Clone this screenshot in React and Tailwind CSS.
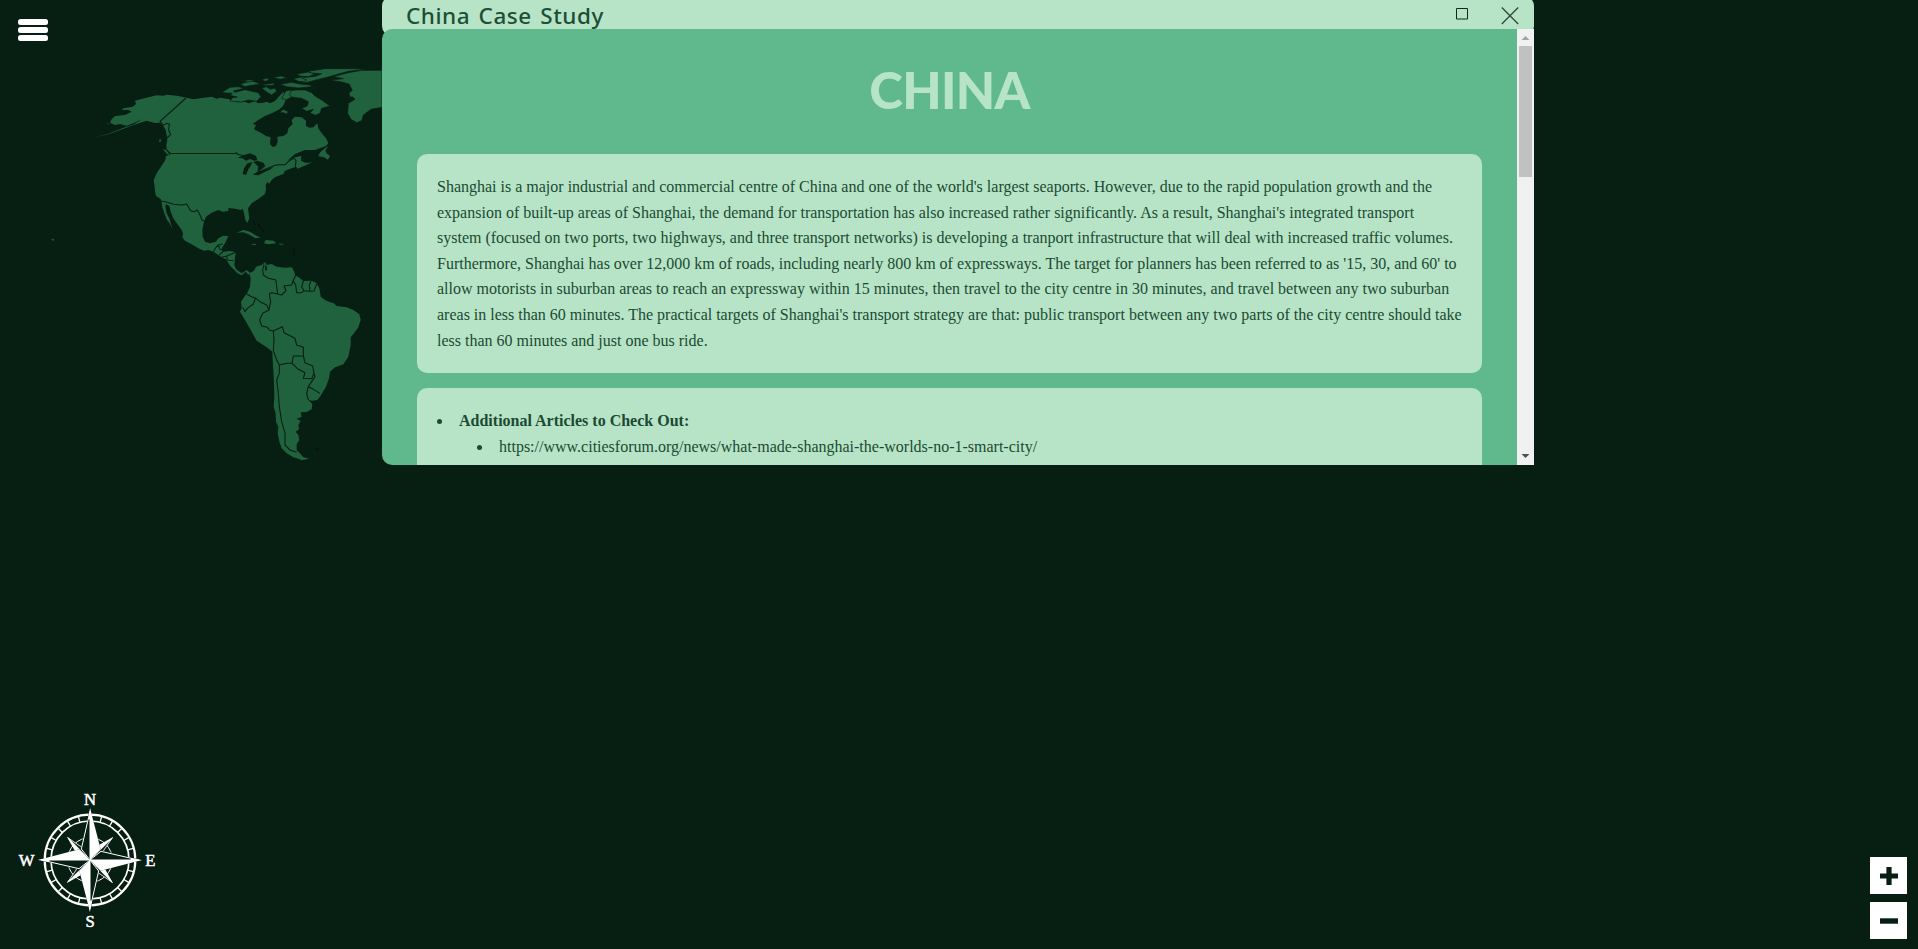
const DARK = "#071e13";
const LAND = "#21623e";

const northAmerica =
  "M280 413L325 403 375 385 425 367 440 362 465 369 480 368 490 378 497 390 500 405 502 420 499 435 500 448 508 455 514 462 505 466 498 468 496 480 485 497 470 520 461 540 464 560 465 575 468 588 482 597 485 605 487 622 493 640 500 658 510 672 517 688 513 672 508 655 500 640 496 620 498 612 508 618 512 635 520 655 532 672 545 690 549 700 547 712 555 722 575 733 595 745 612 752 625 750 640 755 655 765 665 772 678 778 690 797 703 810 712 820 725 826 737 815 745 825 750 818 740 810 725 820 708 808 703 795 705 772 708 757 690 753 670 755 665 745 675 730 685 708 670 707 655 715 648 725 630 730 615 725 608 710 607 690 612 665 618 650 635 638 655 630 668 635 685 633 685 624 705 626 722 630 728 626 732 640 736 660 742 669 748 655 746 640 744 625 755 610 775 597 795 582 798 568 797 555 803 545 807 552 815 540 825 532 850 522 855 512 875 505 888 500 893 506 912 498 937 487 915 488 903 482 903 472 912 462 930 457 950 450 975 440 985 430 978 415 965 400 955 385 952 370 940 382 928 383 918 378 918 362 905 352 885 350 875 360 878 372 865 385 862 400 850 408 832 410 833 425 828 438 818 441 810 432 812 412 798 408 785 400 762 388 768 375 758 372 775 360 795 348 815 340 835 330 850 318 857 300 862 290 850 276 838 288 825 303 810 310 800 305 790 308 775 310 765 304 745 310 735 305 715 307 700 302 685 297 660 293 650 296 635 290 600 295 580 298 560 293 530 287 500 284 490 287 470 286 445 292 425 297 405 302 408 312 398 320 370 325 365 330 385 330 395 335 375 345 345 348 335 358 330 368 345 375 360 372 380 377 400 370 428 357 400 374 375 382 325 401Z";

const arcticIslands = [
  "M665 278L690 262 715 260 732 265 700 273 705 277 735 269 775 278 783 290 770 304 745 300 725 306 690 303 698 293 712 291 690 286 697 280Z",
  "M785 264L800 260 810 268 825 264 830 274 815 285 800 276Z",
  "M860 275L885 270 915 270 935 278 945 288 965 300 990 318 965 325 960 340 947 346 930 339 940 328 920 334 905 325 922 318 925 305 905 295 880 292 863 288Z",
  "M858 272L875 270 868 284 875 291 858 300 845 295Z",
  "M720 252L755 242 782 252 755 256 735 260Z",
  "M725 243L750 239 765 242 745 246Z",
  "M785 239L800 234 808 240 795 244Z",
  "M785 254L825 249 820 256 795 257Z",
  "M840 253L875 247 900 252 930 255 935 260 895 264 860 260Z",
  "M820 232L845 228 860 234 840 238Z",
  "M890 222L925 216 945 222 925 230 900 228Z",
  "M880 236L910 230 935 235 915 246 895 244Z",
  "M925 214L975 206 1060 206 1100 208 1045 214 1015 222 985 231 950 239 930 245 905 250 920 240 905 234 950 228 965 221 935 219Z",
  "M837 338L850 328 865 335 860 342 850 338Z",
  "M990 240L1030 236 1000 230 1045 218 1085 211 1146 211 1146 322 1113 328 1090 345 1085 362 1070 368 1053 358 1043 340 1045 310 1065 298 1057 290 1050 292 1047 280 1057 270 1047 252 1025 246Z",
];

const smallIslands = [
  "M985 437L962 455 952 468 972 472 984 479 990 468 980 460 976 452Z",
  "M480 416L484 420 480 428 477 422Z",
  "M488 447L498 450 510 464 502 463Z",
  "M710 698L730 690 750 695 765 705 782 713 765 714 750 705 730 697Z",
  "M797 720L820 722 829 730 805 733 792 730Z",
  "M754 732L765 731 770 734 758 735Z",
  "M837 731L850 731 849 734 838 734Z",
  "M155 716L162 717 160 723 156 721Z",
  "M320 370L327 371 325 374Z",
];

const southAmerica =
  "M358 160L372 152 378 140 395 135 405 127 410 135 425 132 440 140 465 143 485 142 493 155 495 165 510 175 520 183 545 182 560 190 568 205 572 230 590 243 612 250 620 258 650 262 670 270 688 283 692 300 685 322 672 340 662 352 662 375 655 410 640 433 615 442 600 455 597 475 588 500 572 527 562 540 548 542 535 540 547 552 545 568 530 576 512 577 515 590 500 597 512 602 505 615 507 628 497 635 505 645 508 660 500 672 500 690 512 702 520 712 537 716 515 719 490 712 470 700 455 685 448 665 443 640 445 620 438 605 437 580 431 560 433 530 432 490 430 450 428 420 427 395 410 382 380 362 365 335 345 300 330 275 335 265 333 245 342 232 352 218 360 200 362 175Z";

const southBorders =
  "M402 133L398 150 400 165 415 175 438 180 440 200 443 222 425 218 418 222 422 245 417 270M443 222L455 225 468 212 462 198 485 195 490 180 500 162M490 182L497 195 500 218 515 218 522 212 515 200 520 183M522 212L540 214 538 195 543 183M540 214L552 213 560 192M350 222L365 230 378 235 390 245 410 255 417 270 398 280 389 300 395 318 412 322 418 330 430 333 457 320 462 338 495 355 500 375 520 382 520 408 490 408 486 430 470 430 448 435 440 420 430 392 432 360 430 333M376 235L370 252 352 265 345 275 338 262M486 430L505 448 525 458 520 475 545 476 552 460 548 438 525 428 520 408M552 460L555 470 535 500 550 508 570 520M535 500L530 520 535 540M448 435L448 460 440 480 445 520 448 560 455 605 465 640 465 675 480 690 500 697";

function WorldMap() {
  return (
    <svg viewBox="0 0 1146 1395" className="h-[465px] w-[382px]" aria-hidden="true">
      <g fill={LAND}>
        <path d={northAmerica} />
        {arcticIslands.map((d) => (
          <path key={d} d={d} stroke={DARK} strokeWidth="2" />
        ))}
        {smallIslands.map((d) => (
          <path key={d} d={d} />
        ))}
      </g>
      <g fill={DARK}>
        <path d="M712 473L735 464 750 460 768 468 772 480 762 482 750 477 738 482 728 475Z" />
        <path d="M757 486L742 490 732 505 728 522 738 525 745 508 752 498Z" />
        <path d="M760 486L772 482 790 488 796 498 785 508 772 516 775 500Z" />
        <path d="M758 524L775 514 800 508 820 500 812 508 790 518 775 526Z" />
        <path d="M862 482L885 462 915 450 945 450 978 438 960 455 955 468 945 482 925 488 908 482 905 468 885 472Z" />
        <path d="M855 308L880 303 905 308 900 322 880 328 860 322 845 325Z" />
      </g>
      <g fill="none" stroke={DARK} strokeWidth="3.2" strokeLinejoin="round">
        <path d="M558 294L480 364 490 376 500 370 508 372 506 390 512 404 500 414" />
        <path d="M514 460.500L706 460.500 710 458 712 463 735 468M785 512L820 498 832 494 855 494 868 482 882 474 888 482 886 500" />
        <path d="M483 603L500 606 520 613 545 615 560 612 572 632 582 635 592 630 600 645 606 660 614 664" />
        <path d="M640 755L648 742 655 735 668 732M655 735L660 748 672 752 658 765M665 772L680 768 708 757M680 768L682 780 700 782" />
        <g transform="translate(390 660)">
          <path d={southAmerica} fill={LAND} stroke="none" />
          <path d={southBorders} />
          <path d="M404 136L410 138 411 151 406 152Z" fill={DARK} stroke="none" />
          <path d="M487 706L505 698 518 712 537 716 515 720Z" fill={LAND} stroke="none" />
          <path d="M555 686h8m3-2h7m-15 7h7" stroke="#03120a" />
          <path d="M370 2l6 14m8-4l8 12m3 4l7 8M492 85v24" stroke="#03120a" />
        </g>
      </g>
    </svg>
  );
}

const tickAngles = [15, 30, 45, 60, 75, 105, 120, 135, 150, 165, 195, 210, 225, 240, 255, 285, 300, 315, 330, 345];
const quarters = [0, 90, 180, 270];

function Compass() {
  return (
    <svg viewBox="-222 -207 450 420" className="h-[140px] w-[150px]" fill="none" stroke="white">
      <circle r="136" strokeWidth="6.5" />
      <circle r="117" strokeWidth="5" />
      {tickAngles.map((a) => (
        <path key={a} d="M0 -134V-117" strokeWidth="4" transform={`rotate(${a})`} />
      ))}
      <circle r="67" strokeWidth="3" />
      <circle r="50" strokeWidth="2.5" />
      {quarters.map((a) => (
        <g key={a} transform={`rotate(${a})`} strokeWidth="2.5">
          <path d="M66 -65L26 -39 0 0 39 -26Z" fill={DARK} />
          <path d="M68 -67L24 -42 0 0Z" fill="white" />
        </g>
      ))}
      {quarters.map((a) => (
        <g key={a} transform={`rotate(${a})`}>
          <path d="M0 -154L-29 -34 0 0 32 -32Z" fill={DARK} stroke="none" />
          <path d="M0 -146L-26 -33 0 0Z" fill={DARK} strokeWidth="3" />
          <path d="M0 -156L32 -32 0 0Z" fill="white" stroke="none" />
          <path d="M0 -156L5 -122H-5Z" fill="white" stroke="none" />
        </g>
      ))}
      <g
        fill="white"
        stroke="white"
        strokeWidth="1.5"
        fontSize="50"
        textAnchor="middle"
        style={{ fontFamily: '"Liberation Serif", serif' }}
      >
        <text x="0" y="-165">N</text>
        <text x="181" y="17">E</text>
        <text x="0" y="202">S</text>
        <text x="-190" y="17">W</text>
      </g>
    </svg>
  );
}

function ZoomButton({ label, minus }) {
  return (
    <button aria-label={label} className="flex h-[37px] w-[37px] items-center justify-center bg-white">
      <svg viewBox="0 0 18 18" className="h-[18px] w-[18px]" fill={DARK}>
        <path d={minus ? "M0 6.300h18v5.400H0z" : "M0 6.500h6.400V0h5.200v6.500H18v5H11.600v6.500H6.400v-6.500H0z"} />
      </svg>
    </button>
  );
}

function ScrollBar() {
  return (
    <div className="flex w-[17px] shrink-0 flex-col items-center bg-[#f1f1f1]">
      <svg viewBox="0 0 17 17" className="h-[17px] w-[17px]" fill="#a3a3a3">
        <path d="M4.500 11L8.500 7 12.500 11z" />
      </svg>
      <div className="h-[131px] w-[13px] bg-[#c1c1c1]" />
      <svg viewBox="0 0 17 17" className="mt-auto h-[17px] w-[17px]" fill="#505050">
        <path d="M4.500 6L8.500 10 12.500 6z" />
      </svg>
    </div>
  );
}

function CaseStudyWindow() {
  return (
    <section className="-mt-1 w-[1152px] text-[#1b4a32]">
      <header className="flex h-[40px] items-start rounded-[10px] bg-[#b7e4c7] pl-[24px]">
        <h2 className="mt-[4px] font-['Noto_Sans',sans-serif] text-[22.5px] leading-[32px] font-medium tracking-[0.55px] [word-spacing:2px] whitespace-nowrap text-[#1b5036]">
          China Case Study
        </h2>
        <svg viewBox="0 0 13 12" className="mt-[12px] ml-auto h-[12px] w-[13px]" fill="none" stroke="#10261a">
          <path d="M1.500 .5h11v10.500h-11z" />
        </svg>
        <svg viewBox="0 0 18 18" className="mt-[11px] mr-[15px] ml-[33px] h-[18px] w-[18px]" stroke="#2a4a39" strokeWidth="1.300">
          <path d="M.8.500l16.400 16.500M17.200.500L.8 17" />
        </svg>
      </header>
      <div className="relative -mt-[7px] flex h-[436px] overflow-hidden rounded-tl-[10px] rounded-bl-[10px] bg-[#60b88d]">
        <div className="flex-1 overflow-hidden pr-[35px] pl-[35px]">
          <h1 className="flex h-[125px] items-center justify-center pb-[4px] font-['Lato',sans-serif] text-[51px] leading-none font-black tracking-[-0.7px] text-[#b7e4c7]">
            CHINA
          </h1>
          <div className="flex flex-col gap-[15px] font-['Liberation_Serif',serif] text-base leading-[25.6px]">
            <p className="rounded-[10px] bg-[#b7e4c7] p-5">
              Shanghai is a major industrial and commercial centre of China and one of the world's largest seaports.
              However, due to the rapid population growth and the expansion of built-up areas of Shanghai, the demand for
              transportation has also increased rather significantly. As a result, Shanghai's integrated transport system
              (focused on two ports, two highways, and three transport networks) is developing a tranport infrastructure
              that will deal with increased traffic volumes. Furthermore, Shanghai has over 12,000 km of roads, including
              nearly 800 km of expressways. The target for planners has been referred to as '15, 30, and 60' to allow
              motorists in suburban areas to reach an expressway within 15 minutes, then travel to the city centre in 30
              minutes, and travel between any two suburban areas in less than 60 minutes. The practical targets of
              Shanghai's transport strategy are that: public transport between any two parts of the city centre should
              take less than 60 minutes and just one bus ride.
            </p>
            <ul className="list-inside list-disc rounded-[10px] bg-[#b7e4c7] p-5">
              <li>
                <strong>Additional Articles to Check Out:</strong>
                <ul className="list-inside list-disc pl-10">
                  <li>https://www.citiesforum.org/news/what-made-shanghai-the-worlds-no-1-smart-city/</li>
                </ul>
              </li>
            </ul>
          </div>
        </div>
        <ScrollBar />
      </div>
    </section>
  );
}

export default function App() {
  return (
    <main className="relative flex h-screen flex-col justify-between overflow-hidden bg-[#071e13]">
      <div className="flex items-start">
        <WorldMap />
        <CaseStudyWindow />
      </div>
      <button aria-label="Menu" className="absolute top-[19px] left-[18px] flex w-[30px] flex-col gap-[2px]">
        <span className="h-[6px] rounded-[2.500px] bg-white" />
        <span className="h-[6px] rounded-[2.500px] bg-white" />
        <span className="h-[6px] rounded-[2.500px] bg-white" />
      </button>
      <div className="flex items-end justify-between pr-[11px] pb-[10px] pl-[16px]">
        <div className="pb-[8px]">
          <Compass />
        </div>
        <div className="flex flex-col gap-2">
          <ZoomButton label="Zoom in" />
          <ZoomButton label="Zoom out" minus />
        </div>
      </div>
    </main>
  );
}
